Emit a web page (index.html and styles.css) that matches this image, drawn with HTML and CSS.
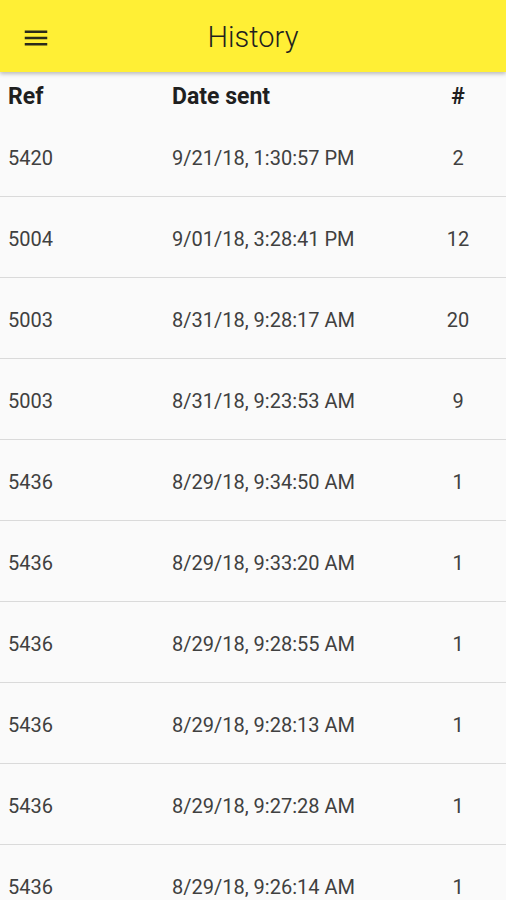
FILE: index.html
```html
<!DOCTYPE html>
<html lang="en">
<head>
    <meta charset="UTF-8">
    <title>History</title>
    <link rel="stylesheet" href="styles.css">
</head>
<body>
    <div class="app-bar">
        <button class="menu-btn" aria-label="Menu">
            <svg width="24" height="24" viewBox="0 0 24 24">
                <path d="M3 18h18v-2H3v2zm0-5h18v-2H3v2zm0-7v2h18V6H3z" fill="#2b2b1a"/>
            </svg>
        </button>
        <h1 class="title">History</h1>
    </div>

    <div class="history">
        <div class="row head">
            <div class="col-ref">Ref</div>
            <div class="col-date">Date sent</div>
            <div class="col-count">#</div>
        </div>

        <div class="row">
            <div class="col-ref">5420</div>
            <div class="col-date">9/21/18, 1:30:57 PM</div>
            <div class="col-count">2</div>
        </div>
        <div class="row">
            <div class="col-ref">5004</div>
            <div class="col-date">9/01/18, 3:28:41 PM</div>
            <div class="col-count">12</div>
        </div>
        <div class="row">
            <div class="col-ref">5003</div>
            <div class="col-date">8/31/18, 9:28:17 AM</div>
            <div class="col-count">20</div>
        </div>
        <div class="row">
            <div class="col-ref">5003</div>
            <div class="col-date">8/31/18, 9:23:53 AM</div>
            <div class="col-count">9</div>
        </div>
        <div class="row">
            <div class="col-ref">5436</div>
            <div class="col-date">8/29/18, 9:34:50 AM</div>
            <div class="col-count">1</div>
        </div>
        <div class="row">
            <div class="col-ref">5436</div>
            <div class="col-date">8/29/18, 9:33:20 AM</div>
            <div class="col-count">1</div>
        </div>
        <div class="row">
            <div class="col-ref">5436</div>
            <div class="col-date">8/29/18, 9:28:55 AM</div>
            <div class="col-count">1</div>
        </div>
        <div class="row">
            <div class="col-ref">5436</div>
            <div class="col-date">8/29/18, 9:28:13 AM</div>
            <div class="col-count">1</div>
        </div>
        <div class="row">
            <div class="col-ref">5436</div>
            <div class="col-date">8/29/18, 9:27:28 AM</div>
            <div class="col-count">1</div>
        </div>
        <div class="row">
            <div class="col-ref">5436</div>
            <div class="col-date">8/29/18, 9:26:14 AM</div>
            <div class="col-count">1</div>
        </div>
    </div>
</body>
</html>
```

FILE: styles.css
```css
body {
    margin: 0;
    font-family: Roboto, "Noto Sans", Arial, sans-serif;
    background: #fafafa;
    color: #404040;
}

.app-bar {
    position: relative;
    z-index: 1;
    box-sizing: border-box;
    height: 72px;
    padding-top: 2px;
    background: #ffef35;
    display: flex;
    align-items: center;
    justify-content: center;
    box-shadow: 0 2px 4px rgba(0, 0, 0, 0.25);
}

.menu-btn {
    position: absolute;
    left: 18px;
    top: 20px;
    width: 36px;
    height: 36px;
    padding: 0;
    border: none;
    background: none;
    display: flex;
    align-items: center;
    justify-content: center;
}

.menu-btn svg {
    width: 30px;
    height: 30px;
}

.title {
    margin: 0;
    font-size: 29px;
    font-weight: 300;
    color: #1f1f1f;
}

.row {
    display: grid;
    grid-template-columns: 164px 1fr 96px;
    align-items: center;
    height: 76px;
    padding: 4px 0 0 8px;
    border-bottom: 1px solid #dadada;
    font-size: 20px;
}

.row.head {
    box-sizing: border-box;
    height: 44px;
    padding-top: 4px;
    border-bottom: none;
    font-size: 23px;
    font-weight: bold;
    color: #1f1f1f;
}

.col-count {
    text-align: center;
}
```
